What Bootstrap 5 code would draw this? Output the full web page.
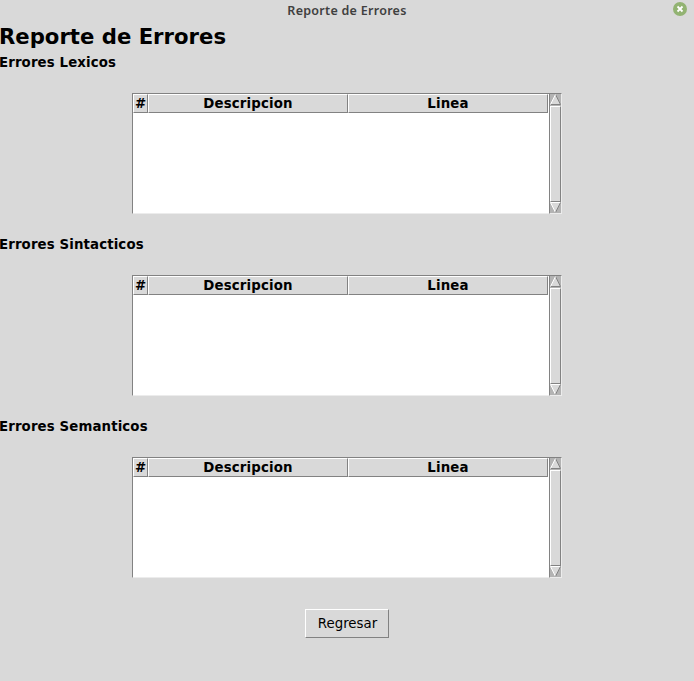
<!DOCTYPE html>
<html lang="es">
<head>
<meta charset="utf-8">
<title>Reporte de Errores</title>
<link rel="stylesheet" href="https://cdn.jsdelivr.net/npm/bootstrap@5.3.0/dist/css/bootstrap.min.css">
<style>
body{background:#d9d9d9;color:#000;font-family:"DejaVu Sans",sans-serif;font-size:13.33px;line-height:16px;height:681px;overflow:hidden}
.titlebar{height:23px;padding:0 7px 0 7px;display:grid;grid-template-columns:14px 1fr 14px}
.titlebar span{font:600 12.5px/22px "Noto Sans",sans-serif;letter-spacing:.28px;color:#404040;text-align:center}
.titlebar svg{margin-top:2px}
h1{font-size:21.2px;line-height:28px;height:32px;font-weight:700;margin:0 0 0 -1px}
h2{font-size:13.33px;line-height:16px;font-weight:700;letter-spacing:.12px;margin:0 0 22px -1px}
.report{height:182px}
.tree{width:417px;height:121px;background:#fff;border:1px solid #828282;border-width:1px 0 0 1px;border-bottom:1px solid #ececec}
.tree-head{height:19px;font-weight:700;line-height:18px}
.tree-head div{background:#d9d9d9;border:1px solid #fff;border-right-color:#828282;border-bottom-color:#828282;line-height:17px;text-align:center;white-space:nowrap}
.c1{width:15px}.c2,.c3{width:200px;letter-spacing:.14px}
.scroll{width:13px;height:121px;background:#b3b3b3;border:1px solid;border-color:#828282 #ececec #ececec #828282;padding:0}
.scroll svg{display:block}
.thumb{height:96px;background:#d9d9d9;border:1px solid;border-color:#fff #828282 #828282 #fff}
.back{width:84px;height:29px;background:#d9d9d9;border:1px solid;border-color:#fff #828282 #828282 #fff;border-radius:0;font-size:13.33px;line-height:16px;color:#000;padding:0 0 0 1px}
</style>
</head>
<body>
<header class="titlebar"><i></i><span>Reporte de Errores</span>
<svg width="14" height="14" viewBox="0 0 14 14"><circle cx="7" cy="7" r="7" fill="#92b372"/><path d="M4.5 4.5l5 5M9.5 4.5l-5 5" stroke="#fff" stroke-width="1.8"/></svg>
</header>
<main>
<h1>Reporte de Errores</h1>
<section class="report"><h2>Errores Lexicos</h2>
<div class="d-flex justify-content-center"><div class="tree"><div class="tree-head d-flex"><div class="c1">#</div><div class="c2">Descripcion</div><div class="c3">Linea</div></div></div>
<div class="scroll"><svg width="11" height="12"><path d="M5.5 .5L10.5 10.5H.5z" fill="#d9d9d9"/><path d="M5.5 .5L10.5 10.5H.5" fill="none" stroke="#828282"/><path d="M.5 10.5L5.5 .5" stroke="#fff"/></svg><div class="thumb"></div><svg width="11" height="11"><path d="M.5 .5H10.5L5.5 10.5z" fill="#d9d9d9"/><path d="M10.5 .5H.5L5.5 10.5" fill="none" stroke="#fff"/><path d="M10.5 .5L5.5 10.5" stroke="#828282"/></svg></div></div>
</section>
<section class="report"><h2>Errores Sintacticos</h2>
<div class="d-flex justify-content-center"><div class="tree"><div class="tree-head d-flex"><div class="c1">#</div><div class="c2">Descripcion</div><div class="c3">Linea</div></div></div>
<div class="scroll"><svg width="11" height="12"><path d="M5.5 .5L10.5 10.5H.5z" fill="#d9d9d9"/><path d="M5.5 .5L10.5 10.5H.5" fill="none" stroke="#828282"/><path d="M.5 10.5L5.5 .5" stroke="#fff"/></svg><div class="thumb"></div><svg width="11" height="11"><path d="M.5 .5H10.5L5.5 10.5z" fill="#d9d9d9"/><path d="M10.5 .5H.5L5.5 10.5" fill="none" stroke="#fff"/><path d="M10.5 .5L5.5 10.5" stroke="#828282"/></svg></div></div>
</section>
<section class="report"><h2>Errores Semanticos</h2>
<div class="d-flex justify-content-center"><div class="tree"><div class="tree-head d-flex"><div class="c1">#</div><div class="c2">Descripcion</div><div class="c3">Linea</div></div></div>
<div class="scroll"><svg width="11" height="12"><path d="M5.5 .5L10.5 10.5H.5z" fill="#d9d9d9"/><path d="M5.5 .5L10.5 10.5H.5" fill="none" stroke="#828282"/><path d="M.5 10.5L5.5 .5" stroke="#fff"/></svg><div class="thumb"></div><svg width="11" height="11"><path d="M.5 .5H10.5L5.5 10.5z" fill="#d9d9d9"/><path d="M10.5 .5H.5L5.5 10.5" fill="none" stroke="#fff"/><path d="M10.5 .5L5.5 10.5" stroke="#828282"/></svg></div></div>
</section>
<div class="d-flex justify-content-center mt-2"><button type="button" class="btn back">Regresar</button></div>
</main>
<script src="https://cdn.jsdelivr.net/npm/bootstrap@5.3.0/dist/js/bootstrap.bundle.min.js"></script>
</body>
</html>
